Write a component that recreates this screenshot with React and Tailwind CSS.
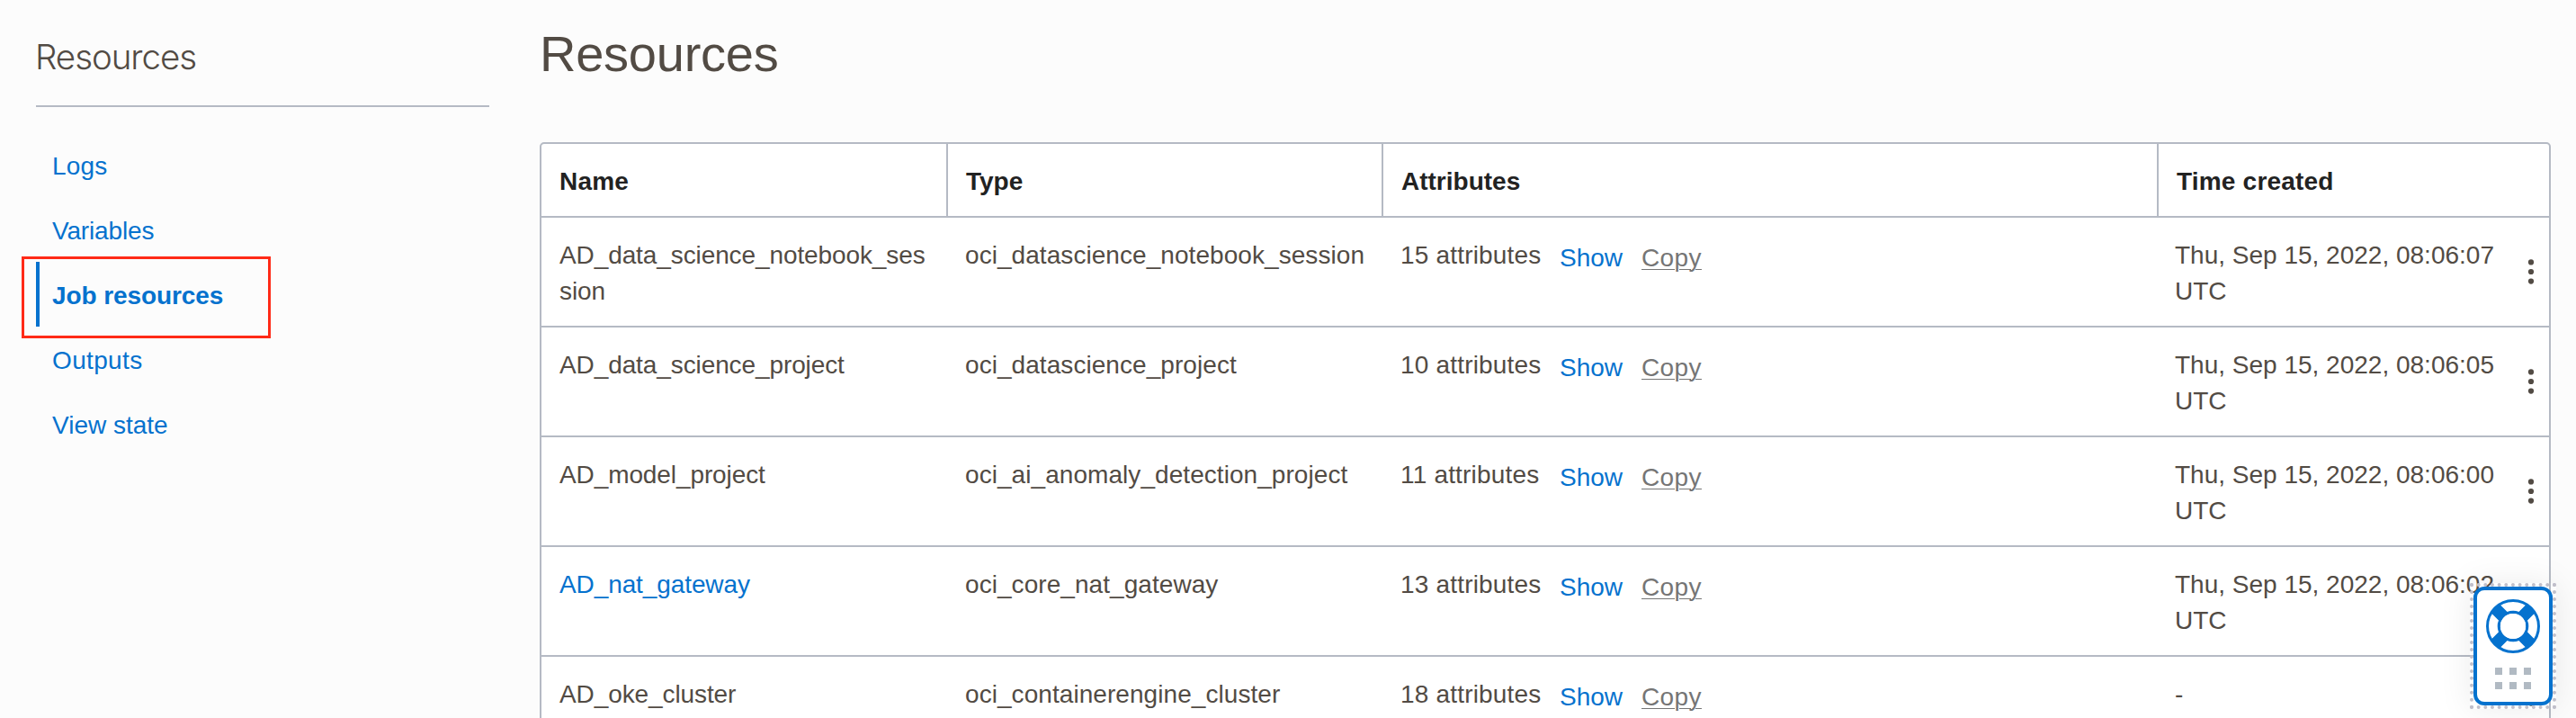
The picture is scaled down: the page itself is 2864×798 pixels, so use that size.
const navItems = [
  { label: "Logs", tracking: "tracking-[0.2px]" },
  { label: "Variables", tracking: "tracking-[-0.15px]" },
  { label: "Job resources", tracking: "tracking-[-0.1px]", active: true },
  { label: "Outputs", tracking: "tracking-[0.35px]" },
  { label: "View state", tracking: "tracking-normal" },
];

const rows = [
  { name: "AD_data_science_notebook_session", type: "oci_datascience_notebook_session", count: 15, time: "Thu, Sep 15, 2022, 08:06:07 UTC" },
  { name: "AD_data_science_project", type: "oci_datascience_project", count: 10, time: "Thu, Sep 15, 2022, 08:06:05 UTC" },
  { name: "AD_model_project", type: "oci_ai_anomaly_detection_project", count: 11, time: "Thu, Sep 15, 2022, 08:06:00 UTC" },
  { name: "AD_nat_gateway", type: "oci_core_nat_gateway", count: 13, time: "Thu, Sep 15, 2022, 08:06:02 UTC", link: true },
  { name: "AD_oke_cluster", type: "oci_containerengine_cluster", count: 18, time: "-" },
];

const columns = "grid grid-cols-[450px_484px_862px_436px]";

function Sidebar() {
  return (
    <aside className="w-[504px] shrink-0">
      <h2 className="h-[119px] border-b-2 border-[#b5bac4] pt-[43px] font-[Inter] text-[38.5px] leading-[40px] font-light tracking-[-1.05px] text-[#524b44]">
        <span className="-ml-px">Resources</span>
      </h2>
      <nav className="mt-7 flex flex-col">
        {navItems.map(({ label, tracking, active }) =>
          active ? (
            <a key={label} className={`relative flex h-[72px] items-center border-l-4 border-[#0572ce] pt-[4px] pl-[14px] font-bold ${tracking}`}>
              {label}
              <span className="absolute -top-[6px] -left-[20px] h-[91px] w-[277px] border-[3px] border-[#ff2a17]" />
            </a>
          ) : (
            <a key={label} className={`flex h-[72px] items-center pt-[4px] pl-[18px] ${tracking}`}>
              {label}
            </a>
          )
        )}
      </nav>
    </aside>
  );
}

function MenuDots() {
  return (
    <svg width="8" height="28" viewBox="0 0 8 28" fill="#524b44" className="absolute top-1/2 right-4 -translate-y-1/2">
      <circle cx="4" cy="3.4" r="3.1" />
      <circle cx="4" cy="14" r="3.1" />
      <circle cx="4" cy="24.6" r="3.1" />
    </svg>
  );
}

function ResourceTable() {
  return (
    <div className="mt-[79px] w-[2236px] rounded-t-[5px] border-2 border-[#b5bac4] bg-white">
      <div className={`${columns} border-b-2 border-[#b5bac4] font-bold text-[#222]`}>
        <div className="h-20 pt-[22px] pl-5 tracking-[0.2px]">Name</div>
        <div className="h-20 border-l-2 border-[#b5bac4] pt-[22px] pl-5">Type</div>
        <div className="h-20 border-l-2 border-[#b5bac4] pt-[22px] pl-5">Attributes</div>
        <div className="h-20 border-l-2 border-[#b5bac4] pt-[22px] pl-5 tracking-[0.2px]">Time created</div>
      </div>
      {rows.map((r) => (
        <div key={r.name} className={`${columns} relative border-b-2 border-[#b5bac4]`}>
          <div className={`pt-[22px] pr-5 pb-[18px] pl-5 tracking-[-0.1px] break-all ${r.link ? "text-[#0572ce]" : ""}`}>
            {r.name}
          </div>
          <div className="pt-[22px] pb-5 pl-[21px] tracking-[0.06px]">{r.type}</div>
          <div className="flex pt-[22px] pl-[21px]">
            <span className="w-[157px] tracking-[0.18px]">{r.count} attributes</span>
            <span className="mt-[3px] ml-5 w-[71px] text-[#0572ce]">Show</span>
            <span className="mt-[3px] ml-5 tracking-[0.4px] text-[#757575] underline decoration-1 underline-offset-[3px]">Copy</span>
          </div>
          <div className="pt-[22px] pr-14 pb-[18px] pl-5">{r.time}</div>
          <MenuDots />
        </div>
      ))}
    </div>
  );
}

function SupportWidget() {
  const cells = [0, 1, 2, 3, 4, 5];
  return (
    <div className="absolute top-[648px] right-[22px] h-[140px] w-[96px] border-4 border-dotted border-[#c0bfca] shadow-[0_0_36px_rgba(0,0,0,0.08)]">
      <div className="flex h-full w-full flex-col items-center rounded-[12px] border-4 border-[#0572ce] bg-white pt-[10px]">
        <svg width="60" height="60" viewBox="-30 -30 60 60" fill="none" stroke="#0572ce">
          <path d="M-20-20L-11-11M20-20L11-11M-20 20L-11 11M20 20L11 11" strokeWidth="13.6" />
          <circle r="28.5" strokeWidth="3" />
          <circle r="15.7" strokeWidth="3.2" />
          <circle r="14.1" fill="#fff" stroke="none" />
        </svg>
        <div className="mt-4 grid grid-cols-3 gap-2">
          {cells.map((c) => (
            <span key={c} className="h-2 w-2 bg-[#b1bac3]" />
          ))}
        </div>
      </div>
    </div>
  );
}

export default function App() {
  return (
    <div className="relative flex h-[798px] w-[2864px] overflow-hidden bg-[#fcfcfc] pl-10 font-['Liberation_Sans',Arial,sans-serif] text-[28px] leading-[40px] text-[#0572ce]">
      <Sidebar />
      <main className="ml-14 text-[#524b44]">
        <h1 className="h-[79px] pt-[30px] text-[56px] leading-[60px] tracking-[-0.25px]">Resources</h1>
        <ResourceTable />
      </main>
      <SupportWidget />
    </div>
  );
}
